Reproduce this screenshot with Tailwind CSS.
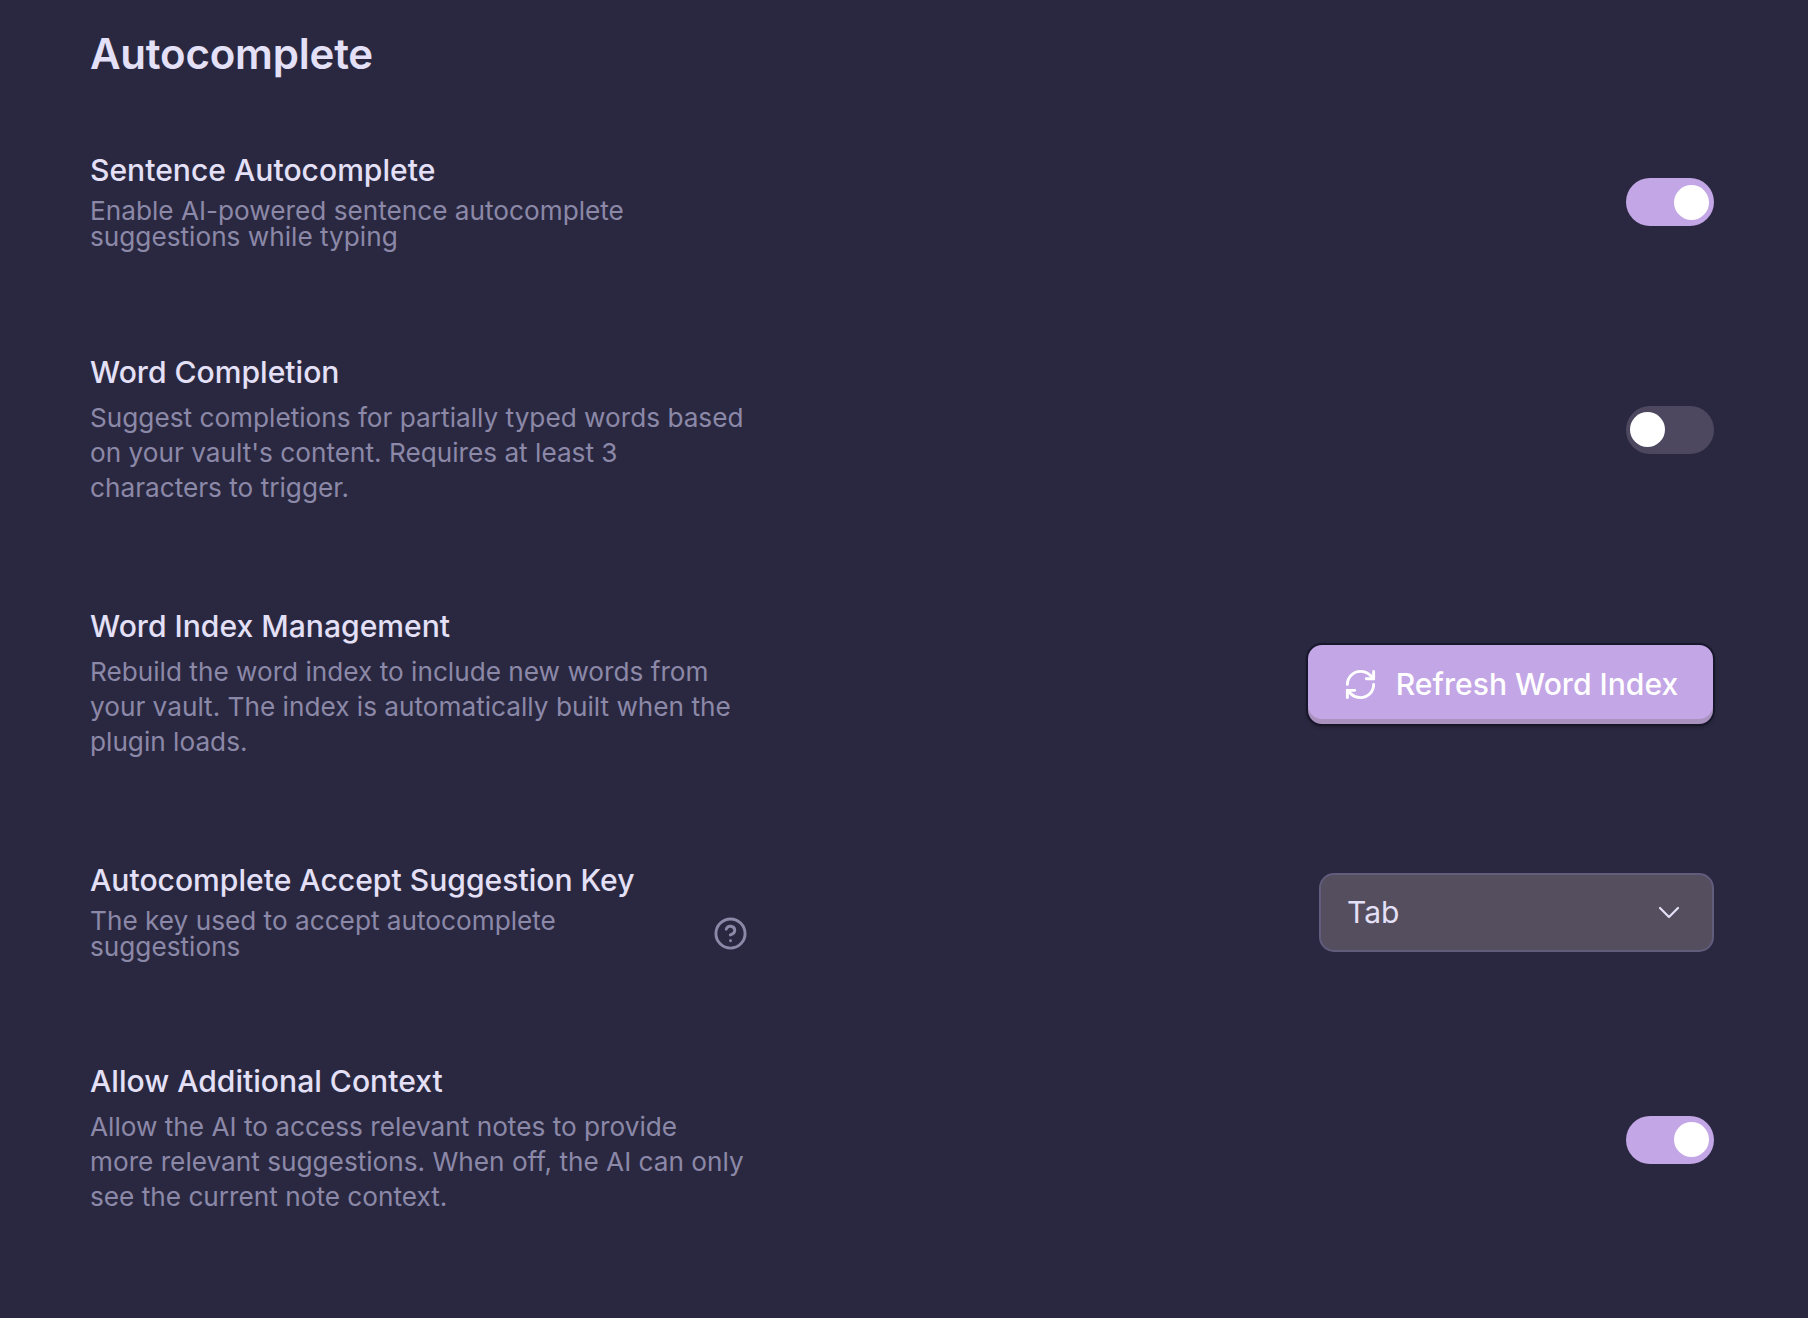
<!DOCTYPE html>
<html lang="en">

<head>
    <meta charset="UTF-8" />
    <title>Autocomplete settings</title>
    <script src="https://cdn.jsdelivr.net/npm/@tailwindcss/browser@4"></script>
</head>

<body class="bg-[#2a2840] min-h-screen font-['Inter',sans-serif] antialiased">
    <div class="pl-[90px] pr-[94px] pt-[30px]">
        <h1 class="h-12 leading-[48px] text-[42px] font-semibold tracking-[-0.2px] text-[#e4e0f7] mb-[72px]">Autocomplete</h1>

        <div class="flex flex-col gap-[101px]">
            <!-- Sentence autocomplete -->
            <div class="flex items-center justify-between mb-px">
                <div class="w-[655px]">
                    <div class="h-10 leading-10 text-[30.1px] font-medium text-[#e4e0f7]">Sentence Autocomplete</div>
                    <p class="mt-2 text-[26.2px] leading-[26px] text-[#8c88a8]">Enable AI-powered sentence autocomplete suggestions while typing</p>
                </div>
                <div class="mt-1 w-[88px] h-12 rounded-full bg-[#c3a6e5] flex items-center justify-end px-[5px]">
                    <div class="w-[35px] h-[35px] rounded-full bg-white"></div>
                </div>
            </div>

            <!-- Word completion -->
            <div class="flex items-center justify-between">
                <div class="w-[655px]">
                    <div class="h-10 leading-10 text-[30.1px] font-medium text-[#e4e0f7]">Word Completion</div>
                    <p class="mt-2 text-[26.2px] leading-[35px] text-[#8c88a8]">Suggest completions for partially typed words based on your vault's content. Requires at least 3 characters to trigger.</p>
                </div>
                <div class="mt-0.5 w-[88px] h-12 rounded-full bg-[#4d485f] flex items-center justify-start px-[4px]">
                    <div class="w-[35px] h-[35px] rounded-full bg-white"></div>
                </div>
            </div>

            <!-- Word index -->
            <div class="flex items-center justify-between">
                <div class="w-[655px]">
                    <div class="h-10 leading-10 text-[30.1px] font-medium text-[#e4e0f7]">Word Index Management</div>
                    <p class="mt-2 text-[26.2px] leading-[35px] text-[#8c88a8]">Rebuild the word index to include new words from your vault. The index is automatically built when the plugin loads.</p>
                </div>
                <button class="mt-1 w-[409px] h-[83px] -mr-[1px] rounded-[16px] bg-[#c3a6e5] border-2 border-[#17162b] shadow-[inset_0_-5px_0_#a992bd,0_2px_3px_rgba(0,0,0,0.2)] flex items-center justify-center gap-[18px] text-[30.1px] font-medium text-white">
                    <svg xmlns="http://www.w3.org/2000/svg" class="w-[35px] h-[35px]" viewBox="0 0 24 24" fill="none" stroke="currentColor" stroke-width="2" stroke-linecap="round" stroke-linejoin="round"><path d="M3 12a9 9 0 0 1 9-9 9.75 9.75 0 0 1 6.74 2.74L21 8" /><path d="M21 3v5h-5" /><path d="M21 12a9 9 0 0 1-9 9 9.75 9.75 0 0 1-6.74-2.74L3 16" /><path d="M8 16H3v5" /></svg>
                    Refresh Word Index
                </button>
            </div>

            <!-- Accept key -->
            <div class="flex items-center justify-between">
                <div class="w-[655px]">
                    <div class="h-10 leading-10 text-[30.1px] font-medium text-[#e4e0f7] whitespace-nowrap">Autocomplete Accept Suggestion Key</div>
                    <div class="mt-2 flex items-center justify-between">
                        <p class="w-[560px] text-[26.2px] leading-[26px] text-[#8c88a8]">The key used to accept autocomplete suggestions</p>
                        <svg xmlns="http://www.w3.org/2000/svg" class="w-[35px] h-[35px] -mr-[3px] -mt-[2px] text-[#8c88a8]" viewBox="0 0 24 24" fill="none" stroke="currentColor" stroke-width="2" stroke-linecap="round" stroke-linejoin="round"><circle cx="12" cy="12" r="10" /><path d="M9.09 9a3 3 0 0 1 5.83 1c0 2-3 3-3 3" /><path d="M12 17h.01" /></svg>
                    </div>
                </div>
                <div class="mt-1 w-[395px] h-[79px] rounded-[15px] bg-[#544e5e] border-2 border-[#625c7c] flex items-center justify-between pl-[26px] pr-[32px] text-[30px] text-[#e4e0f7]">
                    <span>Tab</span>
                    <svg xmlns="http://www.w3.org/2000/svg" class="w-[22px] h-[13px]" viewBox="0 0 22 13" fill="none" stroke="currentColor" stroke-width="2.2" stroke-linecap="round" stroke-linejoin="round"><path d="M2 2l9 9 9-9" /></svg>
                </div>
            </div>

            <!-- Additional context -->
            <div class="flex items-center justify-between">
                <div class="w-[655px]">
                    <div class="h-10 leading-10 text-[30.1px] font-medium text-[#e4e0f7]">Allow Additional Context</div>
                    <p class="mt-2 text-[26.2px] leading-[35px] text-[#8c88a8]">Allow the AI to access relevant notes to provide more relevant suggestions. When off, the AI can only see the current note context.</p>
                </div>
                <div class="mt-1 w-[88px] h-12 rounded-full bg-[#c3a6e5] flex items-center justify-end px-[5px]">
                    <div class="w-[35px] h-[35px] rounded-full bg-white"></div>
                </div>
            </div>
        </div>
    </div>
</body>

</html>
